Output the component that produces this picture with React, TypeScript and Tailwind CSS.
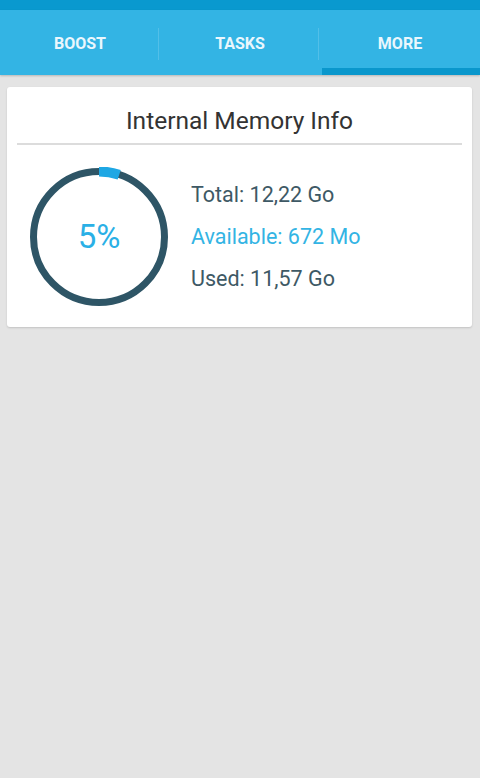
import React from "react";

const tabs = ["BOOST", "TASKS", "MORE"];

const MemoryRing = ({ percent }: { percent: number }) => {
  const r = 65.5;
  const c = 2 * Math.PI * r;
  return (
    <svg width="140" height="140" viewBox="0 0 140 140" className="shrink-0">
      <circle cx="70" cy="70" r={r} fill="none" stroke="#2e5566" strokeWidth="7" />
      <circle
        cx="70"
        cy="70"
        r={r}
        fill="none"
        stroke="#1ea7e4"
        strokeWidth="10"
        strokeDasharray={`${(c * percent) / 100} ${c}`}
        transform="rotate(-90 70 70)"
      />
    </svg>
  );
};

export default function App() {
  return (
    <div className="w-[480px] h-[778px] bg-[#e4e4e4] font-['Roboto',sans-serif] overflow-hidden">
      <div className="h-[10px] bg-[#0999cf]" />
      <div className="relative h-[65px] bg-[#33b4e4] flex shadow-[0_1px_2px_rgba(0,0,0,0.2)]">
        {tabs.map((t, i) => (
          <div key={t} className="relative flex-1 flex items-center justify-center">
            {i > 0 && (
              <div className="absolute -left-[2px] top-[18px] h-[32px] w-px bg-[#52bfe8]" />
            )}
            <span className="text-[16px] font-bold text-[#eaf7fd] pt-[2px]">{t}</span>
            {i === 2 && <div className="absolute left-[2px] right-0 bottom-0 h-[7px] bg-[#0a97cc]" />}
          </div>
        ))}
      </div>

      <div className="mt-[12px] ml-[7px] mr-[8px] bg-white rounded-[3px] shadow-[0_1px_2px_rgba(0,0,0,0.15)] pb-[20px]">
        <div className="pt-[19px] text-center text-[24.5px] leading-[30px] text-[#333333]">
          Internal Memory Info
        </div>
        <div className="mx-[10px] mt-[7px] h-[2px] bg-[#dcdcdc]" />
        <div className="flex items-center pl-[22px] mt-[22px]">
          <div className="relative">
            <MemoryRing percent={5} />
            <div className="absolute inset-0 flex items-center justify-center text-[33px] text-[#2ab0e6]">
              5%
            </div>
          </div>
          <div className="ml-[22px] flex flex-col gap-[10px] text-[21.5px] leading-[32px] text-[#3e5965]">
            <span>Total: 12,22 Go</span>
            <span className="text-[#33b4e4]">Available: 672 Mo</span>
            <span>Used: 11,57 Go</span>
          </div>
        </div>
      </div>
    </div>
  );
}
